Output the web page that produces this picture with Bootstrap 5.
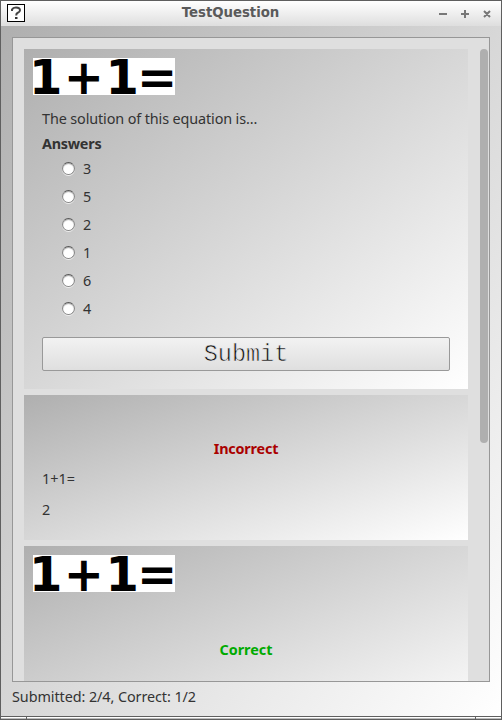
<!DOCTYPE html>
<html lang="en">
<head>
<meta charset="utf-8">
<meta name="viewport" content="width=device-width, initial-scale=1">
<title>TestQuestion</title>
<link href="https://cdn.jsdelivr.net/npm/bootstrap@5.3.0/dist/css/bootstrap.min.css" rel="stylesheet">
<style>
html,body{height:100%;overflow:hidden}
body{font:14.4px/20px "Noto Sans","Open Sans",sans-serif;color:#333;background:#b0b0b0}
.window{width:502px;height:720px;border:1px solid #5f5f5f}
.titlebar{height:25px;background:linear-gradient(#fff,#dedede);color:#5a5a5a;padding:0 9px 2px 6px}
.titlebar .caption{font:bold 13.33px/22px "DejaVu Sans",sans-serif;padding-right:2px;letter-spacing:-.05px}
.titlebar svg{display:block}
.app-body{background:linear-gradient(to bottom right,#afafaf,#fff);padding:11px 11px 0;height:690px}
.viewport-frame{height:645px;border:1px solid #979797;background:#dfdfdf;padding:11px 1px 0 11px}
.question{width:444px;background:linear-gradient(to bottom right,#afafaf,#fff);flex:none}
.q-main{height:340px;padding:9px 18px 0 9px}
.q-wrong{height:145px;padding:44px 18px 0}
.q-right{height:185px;padding:9px 9px 0}
.equation{width:142px;height:37px;background:#fff;color:#000;font:bold 48px/38px "DejaVu Sans",sans-serif;letter-spacing:1.4px;text-indent:-4px;white-space:nowrap}
.equation .last-digit{letter-spacing:-1.8px}
.inner{padding-left:9px}
.prompt{margin-top:14px;white-space:nowrap;letter-spacing:-.12px}
.answers-title{margin-top:5px;letter-spacing:-.25px}
.answers{padding-left:20px;margin-top:1px}
.answers label{height:28px;line-height:28px}
.answers input{appearance:none;width:13px;height:13px;margin:-2px 8px 0 0;border-radius:50%;border:1px solid #858585;border-top-color:#585858;background:#fff;box-shadow:inset 0 1px 1px #aaa,0 1px 0 #eee}
.submit{height:34px;margin-top:14px;border:1px solid #999;border-radius:2px;background:linear-gradient(#f2f2f2,#dfdfdf);font:23.5px/30px "Liberation Mono",monospace;color:#111;padding:1px 0 0;-webkit-text-stroke:.6px #e9e9e9}
.wrong-text{color:#aa0000;letter-spacing:-.2px}
.right-text{color:#00aa00;margin-top:48px}
.wrong-question{margin-top:10px}
.wrong-answer{margin-top:11px}
.thumb{width:8px;height:394px;border-radius:4px;background:#afafaf}
.status{padding-top:5px;white-space:nowrap;letter-spacing:-.08px}
.card-stack{gap:6px}
.grip{height:3px;border-top:1px solid #5f5f5f;background:linear-gradient(#fff 50%,#bbb 50%);padding:0 25px}
.grip span{width:1px;height:2px;background:#5f5f5f}
</style>
<script src="https://cdn.jsdelivr.net/npm/bootstrap@5.3.0/dist/js/bootstrap.bundle.min.js"></script>
</head>
<body>
<div class="window d-flex flex-column">
  <header class="titlebar d-flex align-items-center">
    <svg width="18" height="18" viewBox="0 0 18 18"><rect x=".5" y=".5" width="17" height="17" fill="#fff" stroke="#000"/><path d="M5 7V5.5Q6 3.5 9 3.5Q13 3.5 13 6.3Q13 8 10.5 9Q9.2 9.7 9.2 11.5" fill="none" stroke="#444" stroke-width="2"/><path d="M8 13h2.5v2H8z" fill="#333"/></svg>
    <div class="caption flex-grow-1 text-center">TestQuestion</div>
    <svg width="54" height="12" viewBox="0 0 54 12" fill="none" stroke="#777" stroke-width="2"><path d="M1 7h8M23 7h8M27 3v8M46 4l6 6M52 4l-6 6"/></svg>
  </header>
  <main class="app-body">
    <div class="viewport-frame d-flex justify-content-between overflow-hidden">
      <div class="card-stack d-flex flex-column">
        <section class="question q-main">
          <div class="equation">1+<span class="last-digit">1</span>=</div>
          <div class="inner">
            <div class="prompt">The solution of this equation is...</div>
            <div class="answers-title fw-bold">Answers</div>
            <div class="answers d-flex flex-column">
              <label class="d-flex align-items-center"><input type="radio" name="answer">3</label>
              <label class="d-flex align-items-center"><input type="radio" name="answer">5</label>
              <label class="d-flex align-items-center"><input type="radio" name="answer">2</label>
              <label class="d-flex align-items-center"><input type="radio" name="answer">1</label>
              <label class="d-flex align-items-center"><input type="radio" name="answer">6</label>
              <label class="d-flex align-items-center"><input type="radio" name="answer">4</label>
            </div>
            <button class="submit d-block w-100" type="button">Submit</button>
          </div>
        </section>
        <section class="question q-wrong">
          <div class="wrong-text fw-bold text-center">Incorrect</div>
          <div class="wrong-question">1+1=</div>
          <div class="wrong-answer">2</div>
        </section>
        <section class="question q-right">
          <div class="equation">1+<span class="last-digit">1</span>=</div>
          <div class="right-text fw-bold text-center">Correct</div>
        </section>
      </div>
      <div class="thumb"></div>
    </div>
    <div class="status">Submitted: 2/4, Correct: 1/2</div>
  </main>
  <div class="grip d-flex justify-content-between"><span></span><span></span></div>
</div>
</body>
</html>
